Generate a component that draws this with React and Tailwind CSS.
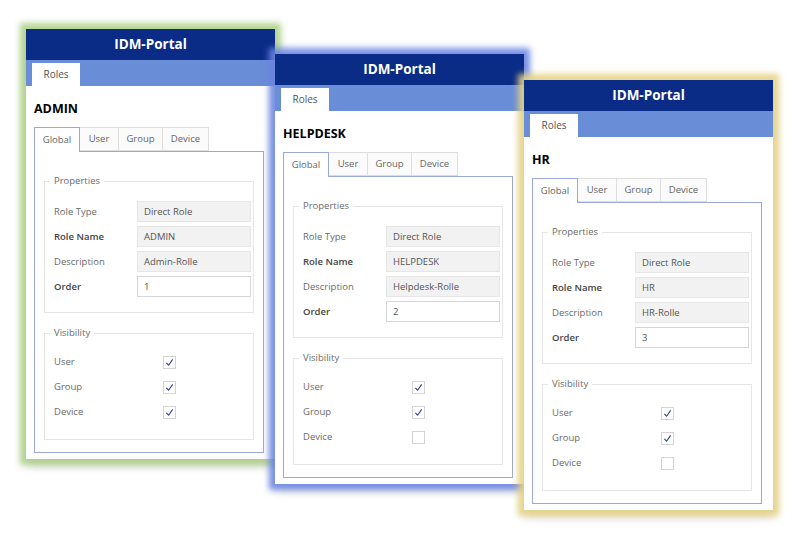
import React from 'react';

const roles = [
  { name: 'ADMIN', description: 'Admin-Rolle', order: '1', device: true, pos: 'left-[26px] top-[29px] z-10', glow: 'shadow-[0_0_6px_6px_rgba(168,206,128,0.85),0_7px_10px_rgba(0,0,0,0.15)]' },
  { name: 'HELPDESK', description: 'Helpdesk-Rolle', order: '2', device: false, pos: 'left-[275px] top-[54px] z-20', glow: 'shadow-[0_0_6px_6px_rgba(108,134,226,0.9),0_7px_10px_rgba(0,0,0,0.15)]' },
  { name: 'HR', description: 'HR-Rolle', order: '3', device: false, pos: 'left-[524px] top-[80px] z-30', glow: 'shadow-[0_0_6px_6px_rgba(230,211,130,0.9),0_7px_10px_rgba(0,0,0,0.15)]' },
];

function Check({ checked }) {
  return (
    <div className="w-[13px] h-[13px] border border-[#d4d4d4] bg-white flex items-center justify-center">
      {checked && (
        <svg width="9" height="9" viewBox="0 0 10 10">
          <path d="M1.5 5.5 L4 8 L8.5 1.5" fill="none" stroke="#2b3f9a" strokeWidth="1.2" />
        </svg>
      )}
    </div>
  );
}

function Field({ label, value, bold, editable }) {
  return (
    <div className="flex items-center h-[21px]">
      <span className={`w-[83px] text-[9.5px] ${bold ? 'font-semibold text-[#444]' : 'text-[#6b6b6b]'}`}>{label}</span>
      <div
        className={`w-[114px] h-[21px] flex items-center px-[6px] text-[9.5px] text-[#555] border ${
          editable ? 'bg-white border-[#d6d6d6]' : 'bg-[#f2f2f2] border-[#e6e6e6]'
        }`}
      >
        {value}
      </div>
    </div>
  );
}

function CheckRow({ label, checked }) {
  return (
    <div className="flex items-center h-[13px]">
      <span className="w-[109px] text-[9.5px] text-[#6b6b6b]">{label}</span>
      <Check checked={checked} />
    </div>
  );
}

function Window({ role }) {
  return (
    <div className={`absolute w-[249px] h-[430px] bg-white flex flex-col ${role.pos} ${role.glow}`}>
      <div className="h-[31px] bg-[#0a2c86] flex items-center justify-center text-white font-bold text-[13.5px]">
        IDM-Portal
      </div>
      <div className="h-[26px] bg-[#6a8dd8] flex items-end pl-[6px]">
        <div className="w-[48px] h-[23px] bg-white flex items-center justify-center text-[10px] text-[#555]">Roles</div>
      </div>
      <div className="pl-[8px] pr-[11px] flex flex-col">
        <h2 className="mt-[14px] h-[18px] flex items-center text-[12.5px] font-bold text-black">{role.name}</h2>
        <div className="mt-[9px] flex h-[24px] text-[9.5px] text-[#666]">
          <div className="w-[46px] flex items-center justify-center bg-white border border-b-0 border-[#9aa8d8] relative z-10 h-[25px]">Global</div>
          <div className="w-[39px] flex items-center justify-center bg-[#fbfbfb] border border-l-0 border-[#dedede]">User</div>
          <div className="w-[44px] flex items-center justify-center bg-[#fbfbfb] border border-l-0 border-[#dedede]">Group</div>
          <div className="w-[46px] flex items-center justify-center bg-[#fbfbfb] border border-l-0 border-[#dedede]">Device</div>
        </div>
        <div className="h-[302px] border border-[#9aa8d8] px-[9px] pt-[22px] flex flex-col gap-[13px]">
          <fieldset className="border border-[#e6e6e6] pl-[9px] pb-[15px]">
            <legend className="px-[4px] -ml-[4px] text-[9.5px] text-[#6b6b6b]">Properties</legend>
            <div className="flex flex-col gap-[4px] mt-[13px]">
              <Field label="Role Type" value="Direct Role" />
              <Field label="Role Name" value={role.name} bold />
              <Field label="Description" value={role.description} />
              <Field label="Order" value={role.order} bold editable />
            </div>
          </fieldset>
          <fieldset className="border border-[#e6e6e6] pl-[9px] pb-[20px]">
            <legend className="px-[4px] -ml-[4px] text-[9.5px] text-[#6b6b6b]">Visibility</legend>
            <div className="flex flex-col gap-[12px] mt-[15px]">
              <CheckRow label="User" checked />
              <CheckRow label="Group" checked />
              <CheckRow label="Device" checked={role.device} />
            </div>
          </fieldset>
        </div>
      </div>
    </div>
  );
}

export default function App() {
  return (
    <div className="relative w-[800px] h-[533px] bg-white overflow-hidden" style={{ fontFamily: '"Open Sans", "Noto Sans", sans-serif' }}>
      {roles.map((r) => (
        <Window key={r.name} role={r} />
      ))}
    </div>
  );
}
